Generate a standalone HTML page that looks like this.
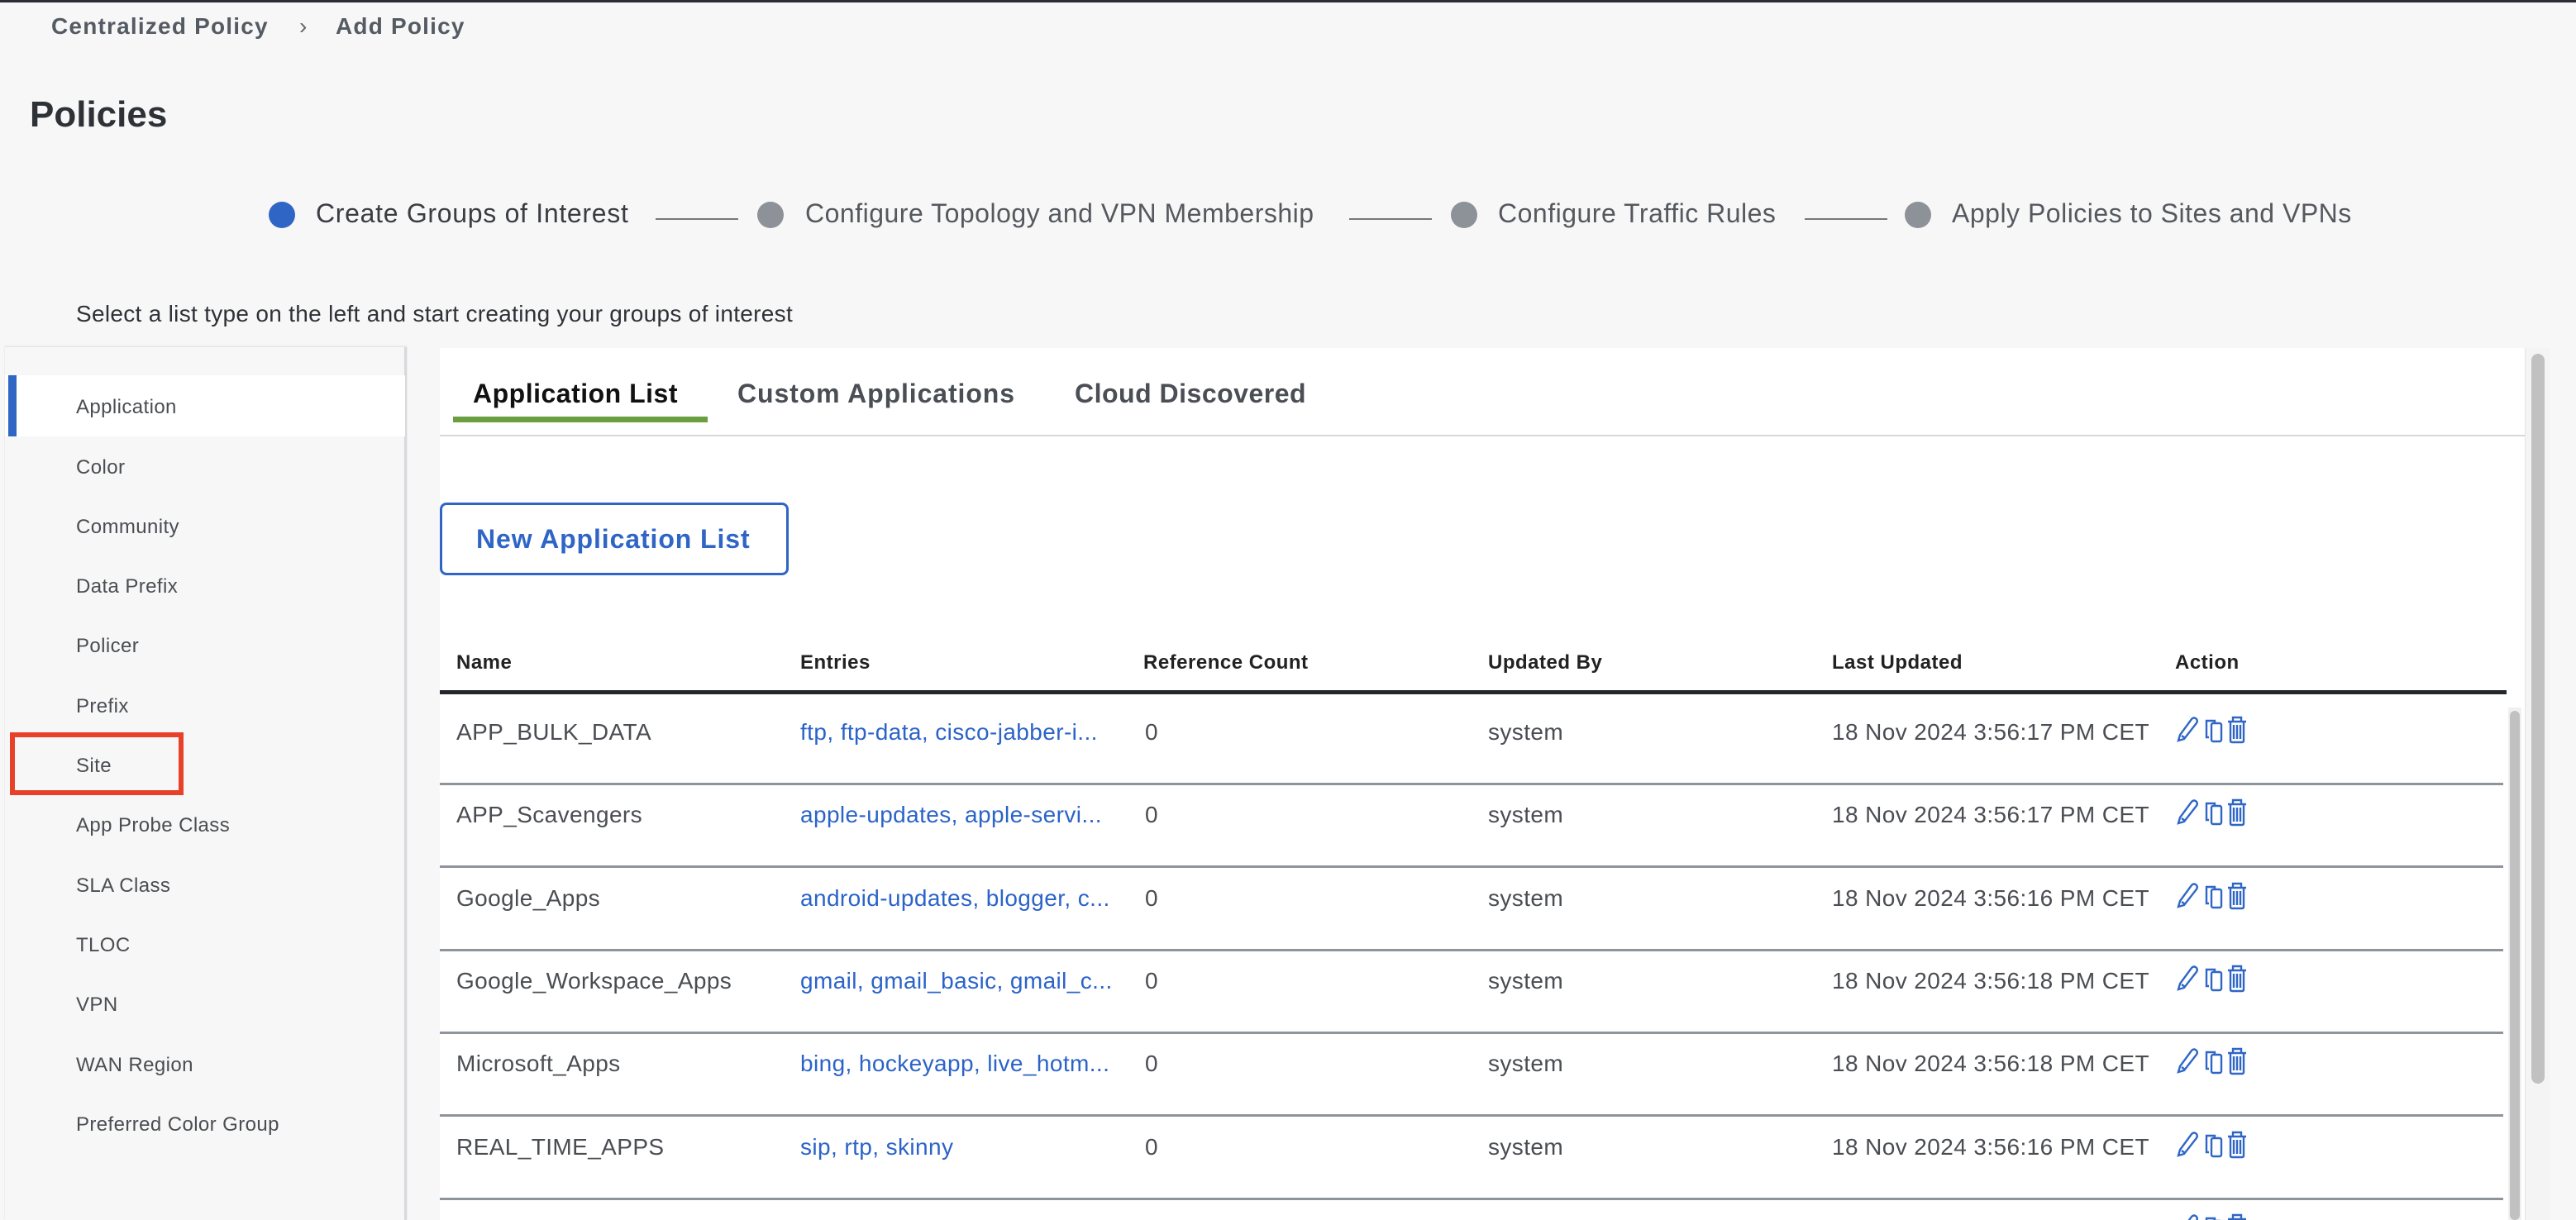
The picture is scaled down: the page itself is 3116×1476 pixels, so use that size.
<!DOCTYPE html>
<html style="width:3116px;height:1476px;overflow:hidden"><head><style>
*{margin:0;padding:0;box-sizing:border-box}
body{width:3116px;height:1476px;overflow:hidden;background:#f7f7f7;font-family:"Liberation Sans",sans-serif;position:relative;color:#3a3d42}
#wrap{position:absolute;left:0;top:0;width:3116px;height:1476px;overflow:hidden}
.a{position:absolute;white-space:nowrap}
.side{font-size:24px;color:#4a4d52;left:92px;letter-spacing:0.4px}
.th{font-size:24px;font-weight:bold;color:#222;top:788px;letter-spacing:0.5px}
.td{font-size:28px;color:#4a4d52;letter-spacing:0.4px}
.lk{color:#2b63c9}
.sep{position:absolute;left:532px;width:2496px;height:3px;background:#8e949b}
.icon{position:absolute;left:2630px}
</style></head><body><div id="wrap">
<div class="a" style="left:0;top:0;width:3116px;height:3px;background:#2c2e33"></div>
<div class="a" style="left:62px;top:16px;font-size:28px;color:#555b63;font-weight:bold;letter-spacing:1.2px">Centralized Policy</div>
<div class="a" style="left:362px;top:16px;font-size:28px;color:#666">›</div>
<div class="a" style="left:406px;top:16px;font-size:28px;color:#555b63;font-weight:bold;letter-spacing:1.2px">Add Policy</div>
<div class="a" style="left:36px;top:114px;font-size:44px;font-weight:bold;color:#2e3136">Policies</div>

<div class="a" style="left:325px;top:244px;width:32px;height:32px;border-radius:50%;background:#2f66c6"></div>
<div class="a" style="left:382px;top:240px;font-size:32px;color:#3a3d42;letter-spacing:0.7px">Create Groups of Interest</div>
<div class="a" style="left:793px;top:264px;width:100px;height:2px;background:#777"></div>
<div class="a" style="left:916px;top:244px;width:32px;height:32px;border-radius:50%;background:#8d9298"></div>
<div class="a" style="left:974px;top:240px;font-size:32px;color:#55595f;letter-spacing:0.5px">Configure Topology and VPN Membership</div>
<div class="a" style="left:1632px;top:264px;width:100px;height:2px;background:#777"></div>
<div class="a" style="left:1755px;top:244px;width:32px;height:32px;border-radius:50%;background:#8d9298"></div>
<div class="a" style="left:1812px;top:240px;font-size:32px;color:#55595f;letter-spacing:0.5px">Configure Traffic Rules</div>
<div class="a" style="left:2183px;top:264px;width:100px;height:2px;background:#777"></div>
<div class="a" style="left:2304px;top:244px;width:32px;height:32px;border-radius:50%;background:#8d9298"></div>
<div class="a" style="left:2361px;top:240px;font-size:32px;color:#55595f;letter-spacing:0.5px">Apply Policies to Sites and VPNs</div>

<div class="a" style="left:92px;top:364px;font-size:28px;color:#2e3136;letter-spacing:0.3px">Select a list type on the left and start creating your groups of interest</div>

<div class="a" style="left:6px;top:420px;width:486px;height:1056px;background:#f7f7f7;border-right:3px solid #d8d9dc;box-shadow:0 -1px 2px #ddd"></div>
<div class="a" style="left:6px;top:454px;width:484px;height:74px;background:#fff"></div>
<div class="a" style="left:10px;top:454px;width:10px;height:74px;background:#2f66c6"></div>
<div class="a side" style="top:479px">Application</div>
<div class="a side" style="top:552px">Color</div>
<div class="a side" style="top:624px">Community</div>
<div class="a side" style="top:696px">Data Prefix</div>
<div class="a side" style="top:768px">Policer</div>
<div class="a side" style="top:841px">Prefix</div>
<div class="a side" style="top:913px">Site</div>
<div class="a side" style="top:985px">App Probe Class</div>
<div class="a side" style="top:1058px">SLA Class</div>
<div class="a side" style="top:1130px">TLOC</div>
<div class="a side" style="top:1202px">VPN</div>
<div class="a side" style="top:1275px">WAN Region</div>
<div class="a side" style="top:1347px">Preferred Color Group</div>
<div class="a" style="left:12px;top:886px;width:210px;height:76px;border:6px solid #e8412a"></div>

<div class="a" style="left:532px;top:421px;width:2522px;height:1055px;background:#fff"></div>
<div class="a" style="left:572px;top:458px;font-size:32px;font-weight:bold;color:#111;letter-spacing:0.5px">Application List</div>
<div class="a" style="left:892px;top:458px;font-size:32px;font-weight:bold;color:#4a4e55;letter-spacing:0.9px">Custom Applications</div>
<div class="a" style="left:1300px;top:458px;font-size:32px;font-weight:bold;color:#4a4e55;letter-spacing:0.5px">Cloud Discovered</div>
<div class="a" style="left:548px;top:504px;width:308px;height:7px;background:#6a9f3f"></div>
<div class="a" style="left:532px;top:526px;width:2522px;height:2px;background:#d6d8dc"></div>

<div class="a" style="left:532px;top:608px;width:422px;height:88px;border:3px solid #2f66c6;border-radius:8px;background:#fff"></div>
<div class="a" style="left:576px;top:634px;font-size:32px;font-weight:bold;color:#2f66c6;letter-spacing:0.9px">New Application List</div>

<div class="a th" style="left:552px">Name</div>
<div class="a th" style="left:968px">Entries</div>
<div class="a th" style="left:1383px">Reference Count</div>
<div class="a th" style="left:1800px">Updated By</div>
<div class="a th" style="left:2216px">Last Updated</div>
<div class="a th" style="left:2631px">Action</div>
<div class="a" style="left:532px;top:835px;width:2500px;height:5px;background:#23262b"></div>

<div id="rows"></div>

<div class="a" style="left:3034px;top:856px;width:16px;height:620px;background:#f0f0f0"></div>
<div class="a" style="left:3036px;top:860px;width:12px;height:616px;border-radius:6px;background:#c1c1c1"></div>
<div class="a" style="left:3054px;top:421px;width:30px;height:1055px;background:#f4f4f4;border-left:1px solid #e4e4e4"></div>
<div class="a" style="left:3062px;top:428px;width:16px;height:883px;border-radius:8px;background:#c1c1c1"></div>
</div>
<script>
var d=[["APP_BULK_DATA","ftp, ftp-data, cisco-jabber-i...","18 Nov 2024 3:56:17 PM CET"],
["APP_Scavengers","apple-updates, apple-servi...","18 Nov 2024 3:56:17 PM CET"],
["Google_Apps","android-updates, blogger, c...","18 Nov 2024 3:56:16 PM CET"],
["Google_Workspace_Apps","gmail, gmail_basic, gmail_c...","18 Nov 2024 3:56:18 PM CET"],
["Microsoft_Apps","bing, hockeyapp, live_hotm...","18 Nov 2024 3:56:18 PM CET"],
["REAL_TIME_APPS","sip, rtp, skinny","18 Nov 2024 3:56:16 PM CET"],
["VIDEO_CONF","webex, zoom, ms-teams...","18 Nov 2024 3:56:18 PM CET"]];
var ic='<svg width="100" height="40" viewBox="0 0 100 40" fill="none" stroke="#2f66c6" stroke-width="2.4"><path d="M5 32 L7 25 L21 6 Q24 3 27 6 Q29 9 26 12 L12 30 Z M9 26 L13 29"/><path d="M42 28 h-3 v-20 h10 v3"/><rect x="45" y="11" width="12" height="22" rx="2"/><path d="M65 9 h22 M71 9 v-5 h10 v5 M68 9 v23 q0 2 2 2 h12 q2 0 2-2 v-23 M72 13 v17 M76 13 v17 M80 13 v17"/></svg>';
var h='';
d.forEach(function(r,i){var y=840+i*100.3;
h+='<div class="a td" style="left:552px;top:'+(y+30)+'px">'+r[0]+'</div>';
h+='<div class="a td lk" style="left:968px;top:'+(y+30)+'px">'+r[1]+'</div>';
h+='<div class="a td" style="left:1385px;top:'+(y+30)+'px">0</div>';
h+='<div class="a td" style="left:1800px;top:'+(y+30)+'px">system</div>';
h+='<div class="a td" style="left:2216px;top:'+(y+30)+'px">'+r[2]+'</div>';
h+='<div class="icon" style="top:'+(y+24)+'px">'+ic+'</div>';
h+='<div class="sep" style="top:'+(y+107)+'px"></div>';});
document.getElementById('rows').innerHTML=h;
</script>
</body></html>
